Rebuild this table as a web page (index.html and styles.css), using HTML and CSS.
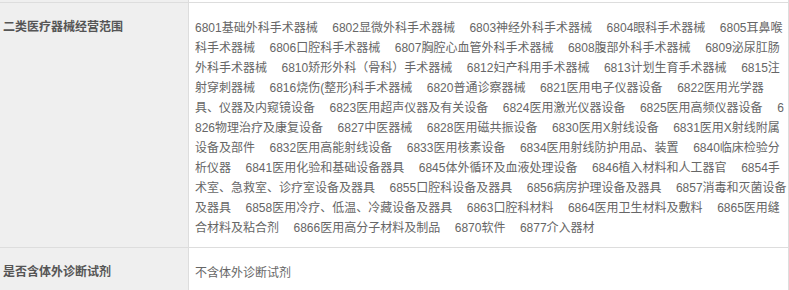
FILE: index.html
```html
<!DOCTYPE html>
<html lang="zh-CN">
<head>
<meta charset="utf-8">
<title>经营范围</title>
<link rel="stylesheet" href="styles.css">
</head>
<body>
<div class="spec">
  <div class="row row-cut"><div class="key"></div><div class="val"></div></div>
  <div class="row">
    <div class="key">二类医疗器械经营范围</div>
    <div class="val scope"><span>6801基础外科手术器械</span><span>6802显微外科手术器械</span><span>6803神经外科手术器械</span><span>6804眼科手术器械</span><span>6805耳鼻喉科手术器械</span><span>6806口腔科手术器械</span><span>6807胸腔心血管外科手术器械</span><span>6808腹部外科手术器械</span><span>6809泌尿肛肠外科手术器械</span><span>6810矫形外科（骨科）手术器械</span><span>6812妇产科用手术器械</span><span>6813计划生育手术器械</span><span>6815注射穿刺器械</span><span>6816烧伤(整形)科手术器械</span><span>6820普通诊察器械</span><span>6821医用电子仪器设备</span><span>6822医用光学器具、仪器及内窥镜设备</span><span>6823医用超声仪器及有关设备</span><span>6824医用激光仪器设备</span><span>6825医用高频仪器设备</span><span>6826物理治疗及康复设备</span><span>6827中医器械</span><span>6828医用磁共振设备</span><span>6830医用X射线设备</span><span>6831医用X射线附属设备及部件</span><span>6832医用高能射线设备</span><span>6833医用核素设备</span><span>6834医用射线防护用品、装置</span><span>6840临床检验分析仪器</span><span>6841医用化验和基础设备器具</span><span>6845体外循环及血液处理设备</span><span>6846植入材料和人工器官</span><span>6854手术室、急救室、诊疗室设备及器具</span><span>6855口腔科设备及器具</span><span>6856病房护理设备及器具</span><span>6857消毒和灭菌设备及器具</span><span>6858医用冷疗、低温、冷藏设备及器具</span><span>6863口腔科材料</span><span>6864医用卫生材料及敷料</span><span>6865医用缝合材料及粘合剂</span><span>6866医用高分子材料及制品</span><span>6870软件</span><span>6877介入器材</span></div>
  </div>
  <div class="row row-last">
    <div class="key">是否含体外诊断试剂</div>
    <div class="val">不含体外诊断试剂</div>
  </div>
</div>
</body>
</html>
```
FILE: styles.css
```css
html, body {
  margin: 0;
  padding: 0;
  background: #ffffff;
}

body {
  font-family: "Liberation Sans", "Noto Sans CJK SC", sans-serif;
  font-size: 12px;
  line-height: 20px;
}

.spec {
  width: 789px;
}

.row {
  display: grid;
  grid-template-columns: 189px 600px;
  border-top: 1px solid #dddddd;
}

.row-cut {
  border-top: none;
  height: 2px;
}

.key {
  background: #efefef;
  border-right: 1px solid #dddddd;
  color: #555555;
  font-weight: bold;
  padding: 14px 3px 0 3px;
}

.val {
  border-right: 1px solid #dddddd;
  color: #666666;
  padding: 15px 1px 9px 6px;
  word-break: break-all;
}

.scope {
  width: 592px;
  padding-right: 1px;
}

.row-cut .key,
.row-cut .val {
  padding: 0;
}

.scope span {
  margin-right: 14.5px;
}

.scope span:last-child {
  margin-right: 0;
}

.row-last .val {
  padding-bottom: 15px;
}
```
